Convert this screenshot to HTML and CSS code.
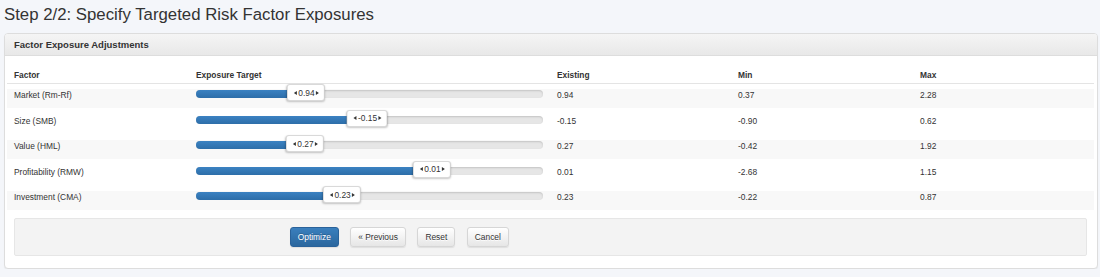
FILE: index.html
```html
<!DOCTYPE html>
<html lang="en">
<head>
  <meta charset="UTF-8">
  <meta name="viewport" content="width=device-width, initial-scale=1.0">
  <title>Specify Targeted Risk Factor Exposures</title>
  <link rel="stylesheet" href="styles.css">
</head>
<body>
  <div class="page">
    <h3 class="title">Step 2/2: Specify Targeted Risk Factor Exposures</h3>

    <div class="panel">
      <div class="panel-heading">Factor Exposure Adjustments</div>
      <div class="panel-body">
        <div class="factor-table">
          <div class="row head">
            <div class="cell">Factor</div>
            <div class="cell">Exposure Target</div>
            <div class="cell">Existing</div>
            <div class="cell">Min</div>
            <div class="cell">Max</div>
          </div>

          <div class="rows">
            <div class="row striped">
              <div class="cell">Market (Rm-Rf)</div>
              <div class="cell">
                <div class="slider">
                  <div class="fill" style="width: 31.7%"></div>
                  <div class="handle" style="left: 31.7%"><span class="arr left"></span>0.94<span class="arr right"></span></div>
                </div>
              </div>
              <div class="cell">0.94</div>
              <div class="cell">0.37</div>
              <div class="cell">2.28</div>
            </div>

            <div class="row">
              <div class="cell">Size (SMB)</div>
              <div class="cell">
                <div class="slider">
                  <div class="fill" style="width: 49.3%"></div>
                  <div class="handle" style="left: 49.3%"><span class="arr left"></span>-0.15<span class="arr right"></span></div>
                </div>
              </div>
              <div class="cell">-0.15</div>
              <div class="cell">-0.90</div>
              <div class="cell">0.62</div>
            </div>

            <div class="row striped">
              <div class="cell">Value (HML)</div>
              <div class="cell">
                <div class="slider">
                  <div class="fill" style="width: 31.4%"></div>
                  <div class="handle" style="left: 31.4%"><span class="arr left"></span>0.27<span class="arr right"></span></div>
                </div>
              </div>
              <div class="cell">0.27</div>
              <div class="cell">-0.42</div>
              <div class="cell">1.92</div>
            </div>

            <div class="row">
              <div class="cell">Profitability (RMW)</div>
              <div class="cell">
                <div class="slider">
                  <div class="fill" style="width: 68%"></div>
                  <div class="handle" style="left: 68%"><span class="arr left"></span>0.01<span class="arr right"></span></div>
                </div>
              </div>
              <div class="cell">0.01</div>
              <div class="cell">-2.68</div>
              <div class="cell">1.15</div>
            </div>

            <div class="row striped">
              <div class="cell">Investment (CMA)</div>
              <div class="cell">
                <div class="slider">
                  <div class="fill" style="width: 42.1%"></div>
                  <div class="handle" style="left: 42.1%"><span class="arr left"></span>0.23<span class="arr right"></span></div>
                </div>
              </div>
              <div class="cell">0.23</div>
              <div class="cell">-0.22</div>
              <div class="cell">0.87</div>
            </div>
          </div>
        </div>

        <div class="well">
          <div class="actions">
            <button class="btn btn-primary">Optimize</button>
            <button class="btn">&laquo; Previous</button>
            <button class="btn">Reset</button>
            <button class="btn">Cancel</button>
          </div>
        </div>
      </div>
    </div>
  </div>
</body>
</html>
```

FILE: styles.css
```css
body {
  margin: 0;
  background: #f4f6fa;
  font-family: "Liberation Sans", Arial, sans-serif;
  color: #333;
}

.page {
  padding: 5px 2px 0 4px;
}

.title {
  margin: 0 0 8px;
  font-size: 16.8px;
  font-weight: normal;
  line-height: 20px;
}

.panel {
  background: #fff;
  border: 1px solid #ddd;
  border-radius: 4px;
  box-shadow: 0 1px 1px rgba(0, 0, 0, 0.05);
}

.panel-heading {
  height: 21px;
  line-height: 21px;
  padding: 0 9px;
  font-size: 9.5px;
  font-weight: bold;
  background: linear-gradient(#f5f5f5, #e8e8e8);
  border-bottom: 1px solid #ddd;
  border-radius: 3px 3px 0 0;
}

.panel-body {
  padding: 13px 3px 12px 2px;
}

.factor-table {
  font-size: 8.4px;
  line-height: 12px;
}

.row {
  display: grid;
  grid-template-columns: 182px 361px 181px 182px 1fr;
}

.cell {
  padding: 0 7px;
}

.head {
  font-weight: bold;
  padding-bottom: 2px;
  border-bottom: 1px solid #e4e4e4;
  margin-bottom: 5px;
}

.rows {
  display: flex;
  flex-direction: column;
  gap: 6.5px;
}

.rows .row {
  height: 19px;
}

.striped {
  background: #f8f8f8;
}

.slider {
  position: relative;
  height: 8px;
  margin-top: 1px;
  background: #e6e6e6;
  border-radius: 4px;
  box-shadow: inset 0 1px 2px rgba(0, 0, 0, 0.15);
}

.fill {
  height: 100%;
  background: linear-gradient(#3b82c2, #2d6ea9);
  border-radius: 4px 0 0 4px;
}

.handle {
  position: absolute;
  top: -6px;
  height: 17px;
  transform: translateX(-50%);
  display: flex;
  align-items: center;
  gap: 1.5px;
  padding: 0 5px 0 6px;
  background: #fff;
  border: 1px solid rgba(0, 0, 0, 0.15);
  border-radius: 3px;
  box-shadow: 0 1px 2px rgba(0, 0, 0, 0.22);
  box-sizing: border-box;
  white-space: nowrap;
  font-size: 8.4px;
  color: #333;
}

.arr {
  width: 0;
  height: 0;
  border-top: 2.5px solid transparent;
  border-bottom: 2.5px solid transparent;
}

.arr.left {
  border-right: 3px solid #333;
}

.arr.right {
  border-left: 3px solid #333;
}

.well {
  margin: 8px 7px 0;
  height: 36px;
  background: #f3f3f3;
  border: 1px solid #e6e6e6;
  border-radius: 2px;
  display: flex;
  align-items: center;
}

.actions {
  display: flex;
  gap: 11.5px;
  padding-left: calc(25% + 7px);
}

.btn {
  font-family: inherit;
  font-size: 8.4px;
  line-height: 12px;
  padding: 3px 7px;
  color: #333;
  background: linear-gradient(#fff, #e6e6e6);
  border: 1px solid #d6d6d6;
  border-radius: 3px;
  box-shadow: 0 1px 1px rgba(0, 0, 0, 0.08);
  text-shadow: 0 1px 0 #fff;
  cursor: pointer;
}

.btn-primary {
  color: #fff;
  background: linear-gradient(#3a7fbd, #2b679e);
  border-color: #2a629a;
  text-shadow: 0 -1px 0 rgba(0, 0, 0, 0.2);
}
```
